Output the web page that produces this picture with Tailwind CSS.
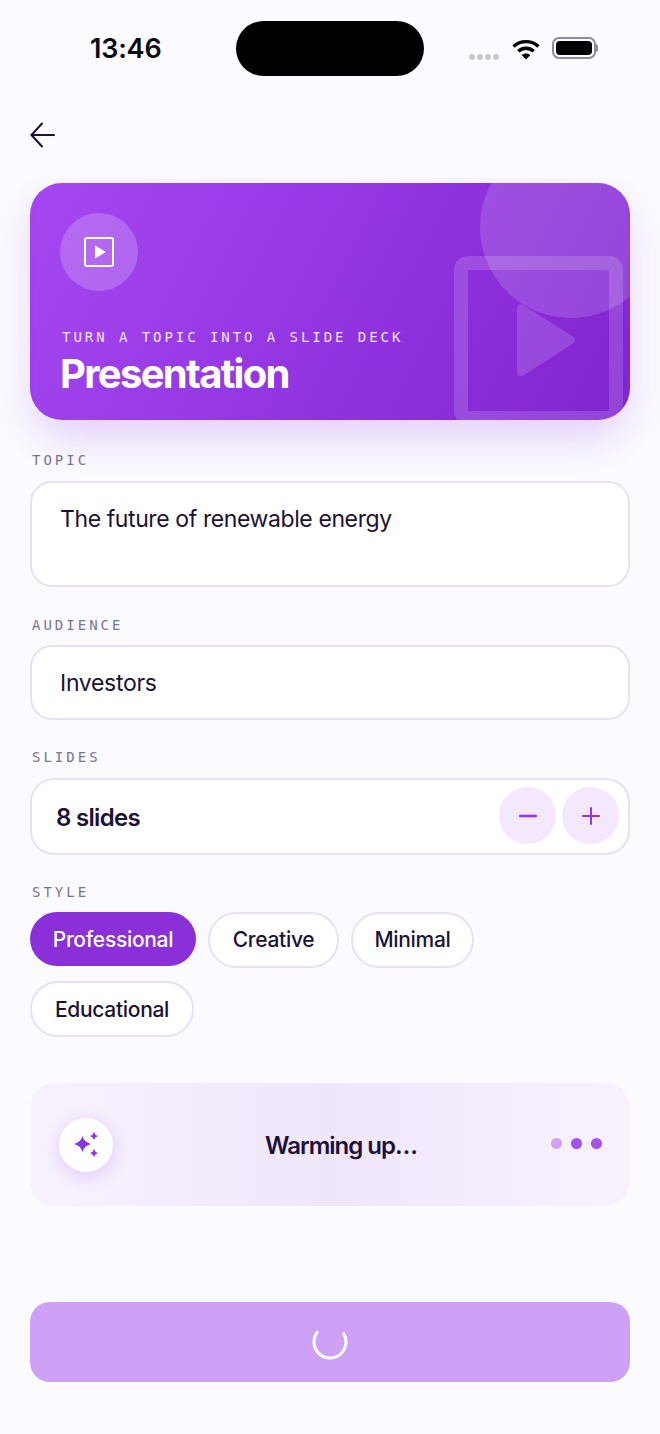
<!DOCTYPE html>
<html lang="en">
<head>
    <meta charset="UTF-8">
    <meta name="viewport" content="width=device-width, initial-scale=1.0">
    <title>Presentation</title>
    <script src="https://cdn.jsdelivr.net/npm/@tailwindcss/browser@4"></script>
</head>
<body class="bg-[#fbfbff]">
    <div class="w-[660px] h-[1434px] flex flex-col overflow-hidden bg-[#fbfbff] text-[#1c1237] font-['Inter',sans-serif]">
        <!-- Status bar -->
        <div class="h-[98px] shrink-0 flex items-start">
            <div class="w-[236px] pt-[32px] pl-[90px] text-[27px] leading-[34px] font-semibold text-[#0c0a14] tracking-[-0.2px]">13:46</div>
            <div class="w-[188px] h-[55px] mt-[21px] rounded-[28px] bg-black"></div>
            <div class="flex items-center pl-[45px] pt-[38px]">
                <div class="flex gap-[2px] mt-[16px]">
                    <span class="w-[6px] h-[6px] rounded-full bg-[#c9c6d4]"></span>
                    <span class="w-[6px] h-[6px] rounded-full bg-[#c9c6d4]"></span>
                    <span class="w-[6px] h-[6px] rounded-full bg-[#c9c6d4]"></span>
                    <span class="w-[6px] h-[6px] rounded-full bg-[#c9c6d4]"></span>
                </div>
                <svg class="ml-[13px]" width="28" height="21" viewBox="0 0 28 21" fill="none" stroke="#000" stroke-width="3.4">
                    <path d="M1.5 7.6C8.6 1 19.4 1 26.5 7.6"/>
                    <path d="M6.3 12.3C10.8 8.3 17.2 8.3 21.7 12.3"/>
                    <path d="M14 20.5 9.6 16C12.1 13.9 15.9 13.9 18.4 16Z" fill="#000" stroke="none"/>
                </svg>
                <div class="ml-[12px] -mt-[2px] flex items-center">
                    <div class="w-[44px] h-[22px] rounded-[7px] border-2 border-[#8f8aa3] p-[2px]">
                        <div class="w-full h-full rounded-[4px] bg-black"></div>
                    </div>
                    <span class="w-[2px] h-[8px] rounded-r-full bg-[#8f8aa3]"></span>
                </div>
            </div>
        </div>

        <!-- Back -->
        <div class="h-[80px] shrink-0 pl-[30px] pt-[24px]">
            <svg width="25" height="26" viewBox="0 0 25 26" fill="none" stroke="#1c1237" stroke-width="2" stroke-linecap="round" stroke-linejoin="round">
                <path d="M24 13H1.5"/>
                <path d="M12 1.5 1.5 13 12 24.5"/>
            </svg>
        </div>

        <!-- Scroll content -->
        <div class="flex-1 overflow-hidden px-[30px] pt-[5px]">
            <!-- Hero -->
            <div class="relative h-[237px] rounded-[32px] overflow-hidden bg-[linear-gradient(118deg,#a548f2,#8024d0)]">
                <div class="absolute w-[182px] h-[182px] rounded-full bg-white/15 top-[-47px] right-[-32px]"></div>
                <svg class="absolute left-[424px] top-[73px]" width="169" height="169" viewBox="0 0 169 169" fill="none">
                    <path fill-rule="evenodd" d="M14 0H155A14 14 0 0 1 169 14V155A14 14 0 0 1 155 169H14A14 14 0 0 1 0 155V14A14 14 0 0 1 14 0ZM14 14V155H155V14Z" fill="#fff" fill-opacity=".15"/>
                    <path d="M63 54C63 48.500 66 47 70 49.500L118 80C122 82.500 122 85.500 118 88L70 119C66 121.500 63 120 63 115Z" fill="#fff" fill-opacity=".15"/>
                </svg>
                <div class="absolute left-[30px] top-[30px] w-[78px] h-[78px] rounded-full bg-white/20 flex items-center justify-center">
                    <svg width="30" height="30" viewBox="0 0 30 30" fill="none">
                        <rect x="1" y="1" width="28" height="28" rx="2" stroke="#fff" stroke-width="2"/>
                        <path d="M11 8.500 22 15 11 21.500Z" fill="#fff"/>
                    </svg>
                </div>
                <div class="absolute left-[32px] top-[145px] font-['DejaVu_Sans_Mono',monospace] text-[14px] leading-[18px] tracking-[2.95px] text-white/85 whitespace-nowrap">TURN A TOPIC INTO A SLIDE DECK</div>
                <div class="absolute left-[30px] top-[164px] text-[40px] leading-[54px] font-bold tracking-[-1.7px] text-white">Presentation</div>
            </div>
            <div class="relative">
                <div class="absolute left-[4px] right-[4px] -top-[237px] h-[237px] rounded-[32px] shadow-[0_18px_44px_rgba(147,51,234,0.22)] -z-0"></div>
            </div>

            <!-- Topic -->
            <div class="relative mt-[31px] font-['DejaVu_Sans_Mono',monospace] text-[14px] leading-[18px] tracking-[3px] text-[#7a7492] pl-[2px]">TOPIC</div>
            <div class="relative mt-[12px] h-[106px] rounded-[22px] border-2 border-[#e8e1f6] bg-white pl-[28px] pt-[20px] text-[23px] leading-[32px] tracking-[-0.4px]">The future of renewable energy</div>

            <!-- Audience -->
            <div class="mt-[29px] font-['DejaVu_Sans_Mono',monospace] text-[14px] leading-[18px] tracking-[3px] text-[#7a7492] pl-[2px]">AUDIENCE</div>
            <div class="mt-[11px] h-[75px] rounded-[22px] border-2 border-[#e8e1f6] bg-white pl-[28px] pt-[2px] flex items-center text-[23px] tracking-[-0.3px]">Investors</div>

            <!-- Slides -->
            <div class="mt-[28px] font-['DejaVu_Sans_Mono',monospace] text-[14px] leading-[18px] tracking-[3px] text-[#7a7492] pl-[2px]">SLIDES</div>
            <div class="mt-[12px] h-[77px] rounded-[24px] border-2 border-[#e8e1f6] bg-white pl-[24px] pr-[9px] flex items-center justify-between">
                <span class="text-[24px] font-semibold tracking-[-0.7px] pt-[2px]">8 slides</span>
                <div class="flex gap-[6px] -mt-[2px]">
                    <div class="w-[57px] h-[57px] rounded-full bg-[#f3e8fd] flex items-center justify-center">
                        <svg width="18" height="18" viewBox="0 0 18 18" fill="none" stroke="#9333ea" stroke-width="2.400" stroke-linecap="round"><path d="M1 9H17"/></svg>
                    </div>
                    <div class="w-[57px] h-[57px] rounded-full bg-[#f3e8fd] flex items-center justify-center">
                        <svg width="18" height="18" viewBox="0 0 18 18" fill="none" stroke="#9333ea" stroke-width="2" stroke-linecap="round"><path d="M1 9H17M9 1V17"/></svg>
                    </div>
                </div>
            </div>

            <!-- Style -->
            <div class="mt-[28px] font-['DejaVu_Sans_Mono',monospace] text-[14px] leading-[18px] tracking-[3px] text-[#7a7492] pl-[2px]">STYLE</div>
            <div class="mt-[11px] flex flex-wrap items-start gap-x-[12px] gap-y-[13px] w-[500px] text-[21px] font-medium tracking-[-0.3px]">
                <div class="w-[166px] h-[54px] rounded-full bg-[#8b2fd9] text-white flex items-center justify-center pt-[1px]">Professional</div>
                <div class="w-[131px] h-[56px] rounded-full border-2 border-[#e8e1f6] bg-white flex items-center justify-center">Creative</div>
                <div class="w-[123px] h-[56px] rounded-full border-2 border-[#e8e1f6] bg-white flex items-center justify-center">Minimal</div>
                <div class="w-[164px] h-[56px] rounded-full border-2 border-[#e8e1f6] bg-white flex items-center justify-center pt-[2px]">Educational</div>
            </div>

            <!-- Progress -->
            <div class="mt-[46px] h-[123px] rounded-[24px] bg-gradient-to-r from-[#f8f2fe] via-[#f0e6fb] to-[#f8f2fe] flex items-center pl-[29px] pr-[28px]">
                <div class="w-[54px] h-[54px] rounded-full bg-white shadow-[0_4px_18px_rgba(147,51,234,0.2)] flex items-center justify-center shrink-0">
                    <svg width="28" height="28" viewBox="0 0 28 28" fill="#8b35e0">
                        <path d="M10.500 5Q12.200 11.300 19 13 12.200 14.700 10.500 21 8.800 14.700 2 13 8.800 11.300 10.500 5Z"/>
                        <path d="M22 1Q22.800 4.200 26 5 22.800 5.800 22 9 21.200 5.800 18 5 21.200 4.200 22 1Z"/>
                        <path d="M22 18Q22.800 21.200 26 22 22.800 22.800 22 26 21.200 22.800 18 22 21.200 21.200 22 18Z"/>
                    </svg>
                </div>
                <div class="flex-1 text-center text-[24px] font-semibold tracking-[-1px] pl-[18px] pt-[3px]">Warming up…</div>
                <div class="flex gap-[9px] -mt-[2px] shrink-0">
                    <span class="w-[11px] h-[11px] rounded-full bg-[#cfa2f6]"></span>
                    <span class="w-[11px] h-[11px] rounded-full bg-[#a452ec]"></span>
                    <span class="w-[11px] h-[11px] rounded-full bg-[#a452ec]"></span>
                </div>
            </div>

            <!-- Generate -->
            <div class="mt-[96px] h-[80px] rounded-[20px] bg-[#cda1f5] flex items-center justify-center">
                <svg width="36" height="36" viewBox="0 0 36 36" fill="none" stroke="#fff" stroke-width="3">
                    <path d="M6 7.400A16 16 0 1 0 31 8.700"/>
                </svg>
            </div>
        </div>
    </div>
</body>
</html>
